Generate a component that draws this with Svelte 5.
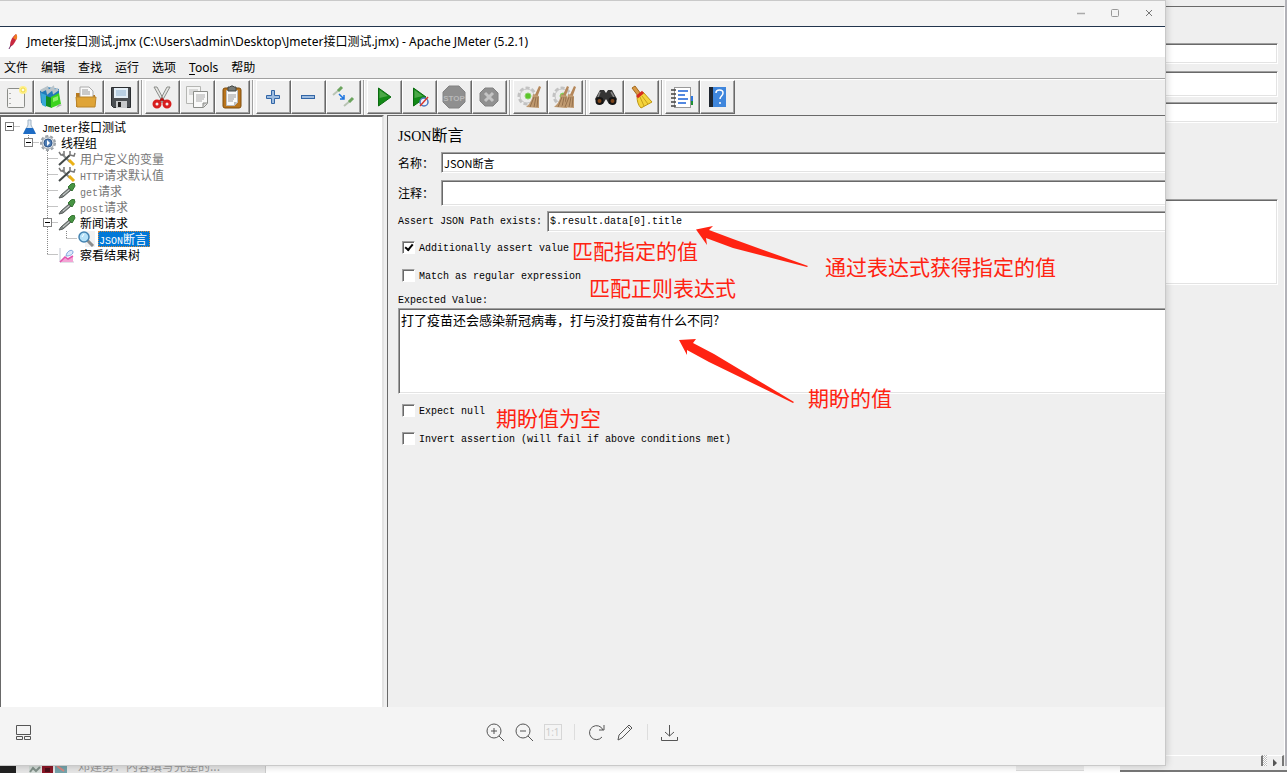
<script>
  const menus = ['文件', '编辑', '查找', '运行', '选项', 'Tools', '帮助'];

  const toolGroups = [
    ['new', 'templates', 'open', 'save'],
    ['cut', 'copy', 'paste'],
    ['expand', 'collapse', 'toggle'],
    ['start', 'start no pauses', 'stop', 'shutdown'],
    ['clear', 'clear all'],
    ['search', 'reset search'],
    ['function helper', 'help']
  ];

  const nodes = [
    { depth: 0, icon: 'flask', latin: 'Jmeter', cjk: '接口测试', open: true, last: true, through: [] },
    { depth: 1, icon: 'gear', latin: '', cjk: '线程组', open: true, last: true, through: [] },
    { depth: 2, icon: 'config', latin: '', cjk: '用户定义的变量', off: true, through: [] },
    { depth: 2, icon: 'config', latin: 'HTTP', cjk: '请求默认值', off: true, through: [] },
    { depth: 2, icon: 'sampler', latin: 'get', cjk: '请求', off: true, through: [] },
    { depth: 2, icon: 'sampler', latin: 'post', cjk: '请求', off: true, through: [] },
    { depth: 2, icon: 'sampler', latin: '', cjk: '新闻请求', open: true, through: [] },
    { depth: 3, icon: 'lens', latin: 'JSON', cjk: '断言', selected: true, last: true, through: [2] },
    { depth: 2, icon: 'chart', latin: '', cjk: '察看结果树', last: true, through: [] }
  ];

  let name = $state('JSON断言');
  let comment = $state('');
  let path = $state('$.result.data[0].title');
  let expected = $state('打了疫苗还会感染新冠病毒，打与没打疫苗有什么不同?');
  let assertValue = $state(true);
  let asRegex = $state(false);
  let expectNull = $state(false);
  let invert = $state(false);
</script>

{#snippet broom(x)}
  <g transform="translate({x} 0)">
    <path d="M21 2l2 1-4 11-3-1z" fill="#b5875a" />
    <path d="M15 10l6 2v12l-13-1c4-3 6-7 7-13z" fill="#c09a70" />
    <path d="M16 13l-4 10M18 13l-2 10M20 13l-1 10" stroke="#94704c" fill="none" />
  </g>
{/snippet}

{#snippet toolIcon(id)}
  <svg width="26" height="26" viewBox="0 0 26 26" aria-hidden="true">
    {#if id === 'new'}
      <rect x="4.500" y="4.500" width="17" height="19" rx="1" fill="#f4f4f3" stroke="#8b8d89" />
      <path d="M7 9v1M7 14v1M7 19v1" stroke="#999" stroke-width="1.500" />
      <circle cx="20" cy="6" r="4" fill="#fff08a" /><circle cx="20" cy="6" r="2" fill="#fffde0" stroke="#f0d840" />
    {:else if id === 'templates'}
      <path d="M2 7l7-4 12 2v10l-12 7-6-3z" fill="#2179b8" />
      <path d="M3 7l6-3 1 4 5-4 1 4 4-3" fill="none" stroke="#b9c4ca" stroke-width="3" />
      <path d="M3 9l5 2v12l-4-2z" fill="#39a9d8" />
      <path d="M8 12l6 2v10l-6-2z" fill="#138f20" /><path d="M13 13l8-4 2 11-10 4z" fill="#3bd31e" />
      <path d="M15 14l5-2v4l-5 2z" fill="#8fef6b" /><path d="M21 20l3 1-6 3z" fill="#a4aaa4" />
    {:else if id === 'open'}
      <path d="M3 9h7l2 2h10v12H3z" fill="#b7791d" />
      <path d="M7 12V3h9l4 4v7H7z" fill="#fafafa" stroke="#aaa" />
      <path d="M9 6h6M9 8h8M9 10h8" stroke="#999" />
      <path d="M3 13h20l-1 10H4z" fill="#dfa437" stroke="#b9842a" />
    {:else if id === 'save'}
      <path d="M3.500 3.500h19v20h-17l-2-2z" fill="#4a4e52" stroke="#2a2d30" />
      <path d="M6 4h14v10H6z" fill="#e4eef6" /><path d="M8 7h10M8 9h10M8 11h10" stroke="#8fb2d1" />
      <path d="M8 17h11v7H8z" fill="#c7c9cb" /><path d="M10 18h3v5h-3z" fill="#222" />
    {:else if id === 'cut'}
      <path d="M5 3l3 0 8 15-2 1zM21 3l-3 0-8 15 2 1z" fill="#e6e6e4" stroke="#8a8c88" />
      <circle cx="8" cy="20" r="3" fill="none" stroke="#d81e1e" stroke-width="3" />
      <circle cx="18" cy="20" r="3" fill="none" stroke="#d81e1e" stroke-width="3" />
      <path d="M11 17l2-2 2 2" fill="none" stroke="#b81010" stroke-width="2" />
    {:else if id === 'copy'}
      <path d="M2.500 2.500h14v17h-14z" fill="#f5f5f4" stroke="#b5b6b3" />
      <path d="M5 6h9M5 8h9M5 10h5" stroke="#bbb" />
      <path d="M9.500 7.500h14v12l-4 4h-10z" fill="#fafafa" stroke="#8b8d89" />
      <path d="M12 11h9M12 13h9M12 15h8M12 17h6" stroke="#aaa" /><path d="M19 23v-4h4" fill="#ccc" stroke="#8b8d89" />
    {:else if id === 'paste'}
      <rect x="4" y="4" width="18" height="20" rx="2" fill="#b9741c" stroke="#7e4c0c" />
      <path d="M7.500 6.500h11v12l-3 3h-8z" fill="#fafafa" stroke="#bbb" />
      <path d="M9 11h8M9 13h8M9 15h6M9 17h5" stroke="#999" />
      <path d="M9 3h2l1-1h2l1 1h2v4H9z" fill="#777b78" stroke="#454844" /><path d="M15 22v-4h3z" fill="#bbb" />
    {:else if id === 'expand'}
      <path d="M11.500 6.500h3v5h5v3h-5v5h-3v-5h-5v-3h5z" fill="#9dbce0" stroke="#3266a6" />
    {:else if id === 'collapse'}
      <rect x="6.500" y="11.500" width="13" height="3" fill="#9dbce0" stroke="#3266a6" />
    {:else if id === 'toggle'}
      <path d="M3 11l6-5M14 22l6-5" stroke="#b9c4b4" stroke-width="2" />
      <path d="M8 7l4-4M19 18l4-4" stroke="#6ba45e" stroke-width="3" />
      <path d="M9 10l5 5M14 11v4h-4" fill="none" stroke="#1d74e0" stroke-width="1.500" />
    {:else if id === 'start' || id === 'start no pauses'}
      <path d="M7.500 4L20 13 7.500 22z" fill="#128a16" stroke="#0b6a10" />
      <path d="M8.500 6L17 12l-8.500 2z" fill="#4ba847" />
      {#if id === 'start no pauses'}
        <circle cx="18" cy="18" r="4" fill="#eef2fb" stroke="#4a78c0" stroke-width="1.500" />
        <path d="M14 22l8-9" stroke="#d8372c" stroke-width="1.500" />
      {/if}
    {:else if id === 'stop'}
      <path d="M8 2h10l6 6v10l-6 6H8l-6-6V8z" fill="#8f8f8f" stroke="#838383" />
      <text x="13" y="17" text-anchor="middle" class="stop">STOP</text>
    {:else if id === 'shutdown'}
      <path d="M9 4h8l5 5v8l-5 5H9l-5-5V9z" fill="#909090" stroke="#828282" />
      <path d="M9 9l8 8M17 9l-8 8" stroke="#c4c4c4" stroke-width="3" />
    {:else if id === 'clear' || id === 'clear all'}
      <circle cx="10" cy="12" r="8" fill="none" stroke="#c2c2c2" stroke-width="3" stroke-dasharray="4 2" />
      <circle cx="10" cy="12" r="7" fill="#ececec" stroke="#c4c4c4" />
      <circle cx="11" cy="12" r="3" fill="#5cc52b" stroke="#8ed46c" />
      {#if id === 'clear all'}{@render broom(-6)}{/if}
      {@render broom(1)}
    {:else if id === 'search'}
      <path d="M7 6l4 0 2 3 2-3 4 0 5 9-3 5h-5l-3-5-3 5H5l-3-5z" fill="#343434" />
      <path d="M7 8l-2 5M18 8l3 5" stroke="#888" stroke-width="1.500" />
      <circle cx="6.500" cy="17" r="3" fill="#7d451c" stroke="#151515" stroke-width="2" />
      <circle cx="19.500" cy="17" r="3" fill="#7d451c" stroke="#151515" stroke-width="2" />
    {:else if id === 'reset search'}
      <path d="M4 4l3-2 6 8-3 2z" fill="#d99a45" stroke="#a46a1c" />
      <path d="M9 12l6-4 9 10-11 6c-3-3-4-7-4-12z" fill="#f5d43b" stroke="#bd9512" />
      <path d="M12 13l4 9M14 12l6 8" stroke="#c7a01c" /><path d="M9 13l6-5" stroke="#d52c20" stroke-width="3" />
    {:else if id === 'function helper'}
      <path d="M21 12h3v5h-3z" fill="#2c76e0" /><path d="M21 17h3v4h-3z" fill="#1d9134" />
      <rect x="5.500" y="3.500" width="16" height="20" fill="#fff" stroke="#999" />
      <path d="M2 6h5M2 10h5M2 14h5M2 18h5M2 22h5" stroke="#444" stroke-width="1.500" />
      <path d="M9 7h10M9 11h7M9 15h10M9 19h8" stroke="#1b62d6" stroke-width="1.500" />
    {:else}
      <path d="M5 3h17v20H5z" fill="#3f86dc" /><path d="M5 3h4v20H5z" fill="#1f2630" />
      <path d="M12 9c0-4 7-4 7 0 0 3-3 3-3 6M16 18v2" fill="none" stroke="#fff" stroke-width="1.500" />
    {/if}
  </svg>
{/snippet}

{#snippet treeIcon(id)}
  <svg class="node-icon" width="18" height="16" viewBox="0 0 18 16" aria-hidden="true">
    {#if id === 'flask'}
      <path d="M8 1h3v5l4 8H4l4-8z" fill="#dfe9f2" stroke="#9fb2c4" /><path d="M6 9h7l3 6H3z" fill="#1e6cc4" />
    {:else if id === 'gear'}
      <circle cx="9" cy="8" r="7" fill="none" stroke="#9ba1a7" stroke-width="2" stroke-dasharray="3 2" />
      <circle cx="9" cy="8" r="6" fill="#d5dbe0" stroke="#a5abb1" />
      <circle cx="9" cy="8" r="4" fill="#4d7db5" stroke="#2e568c" /><path d="M8 5l3 3-3 3z" fill="#fff" />
    {:else if id === 'config'}
      <path d="M4 3l8 8" stroke="#8a8f8f" stroke-width="2" /><path d="M11 9l5 5" stroke="#eab116" stroke-width="3" />
      <path d="M1 14L12 4" stroke="#424848" stroke-width="2" />
      <path d="M1 1l2 3h3V0M12 0v4l4 1 1-3" fill="none" stroke="#777" stroke-width="1.500" />
    {:else if id === 'sampler'}
      <path d="M1 15l2-3 8-7 2 2-8 7z" fill="#848a88" stroke="#555b59" />
      <path d="M5 12l6-5" stroke="#d0d6d4" />
      <path d="M10 4l3-3 3-1 1 3-3 5z" fill="#479443" stroke="#357532" />
    {:else if id === 'lens'}
      <rect x="8" width="10" height="16" fill="#f1f1f1" />
      <path d="M10 9l6 6" stroke="#8d8d8d" stroke-width="3" />
      <circle cx="7" cy="6" r="5" fill="#b5e1f8" stroke="#4383b1" stroke-width="1.500" /><path d="M5 6l2-3" stroke="#fff" />
    {:else}
      <path d="M2 1v14h14" fill="none" stroke="#c3c8d2" />
      <path d="M2 15l5-5 3 2 5-3v6z" fill="#f3a3d4" />
      <path d="M2 15l5-5 3 2 5-3" fill="none" stroke="#e254ae" stroke-width="1.500" />
      <path d="M8 9c1-6 7-7 7-4s-4 4-7 4z" fill="#dbe8fa" stroke="#7fa5dc" />
    {/if}
  </svg>
{/snippet}

<div class="desktop">
  <div class="main">
    <div class="viewer">
      <header class="viewer-bar">
        <button aria-label="Minimize"><svg width="10" height="10"><path d="M1 5.500h8" stroke="#aaa" stroke-width="1.500" /></svg></button>
        <button aria-label="Maximize"><svg width="10" height="10"><rect x="1.500" y="1.500" width="7" height="7" rx="1" fill="none" stroke="#999" /></svg></button>
        <button aria-label="Close"><svg width="10" height="10"><path d="M2 2l6 6M8 2l-6 6" stroke="#777" /></svg></button>
      </header>

      <div class="app">
        <div class="title">
          <svg width="16" height="18" viewBox="0 0 16 18" aria-hidden="true">
            <path d="M11 1c2 3 0 7-3 11l-3 2c0-5 1-9 6-13z" fill="#c8283f" /><path d="M11 1c2 2 1 5 0 6l-3-2z" fill="#ef7d22" />
            <path d="M6 12l-2 4" stroke="#72306d" />
          </svg>
          <span>Jmeter接口测试.jmx (C:\Users\admin\Desktop\Jmeter接口测试.jmx) - Apache JMeter (5.2.1)</span>
        </div>
        <nav class="menu">
          {#each menus as item}
            <button>{#if item === 'Tools'}<u>T</u>ools{:else}{item}{/if}</button>
          {/each}
        </nav>
        <div class="toolbar">
          {#each toolGroups as group}
            <div class="group">
              {#each group as id}
                <button aria-label={id}>{@render toolIcon(id)}</button>
              {/each}
            </div>
          {/each}
        </div>

        <div class="body">
          <ul class="tree">
            {#each nodes as n}
              {@const x = 8.5 + 19 * n.depth}
              <li class:off={n.off}>
                <svg width={19 + 19 * n.depth} height="16" aria-hidden="true">
                  <g stroke="#888" stroke-dasharray="1 1" fill="none">
                    {#each n.through as k}<path d="M{8.5 + 19 * k} 0v16" />{/each}
                    {#if n.depth > 0}<path d="M{x} 0v{n.last ? 8 : 16}" />{/if}
                    <path d="M{x} 7.5H{19 + 19 * n.depth}" />
                  </g>
                  {#if n.open}
                    <rect x={x - 4} y="3.5" width="8" height="8" fill="#fff" stroke="#808080" />
                    <path d="M{x - 2.5} 7.5h5" stroke="#000" />
                  {/if}
                </svg>
                {@render treeIcon(n.icon)}
                <span class="label" class:selected={n.selected}>{#if n.latin}<span class="mono">{n.latin}</span>{/if}{n.cjk}</span>
              </li>
            {/each}
          </ul>

          <form class="panel" onsubmit={(e) => e.preventDefault()}>
            <h1><span>JSON</span>断言</h1>
            <div class="row named">
              <label for="name">名称：</label>
              <input id="name" class="well" bind:value={name} />
            </div>
            <div class="row named tall">
              <label for="comment">注释：</label>
              <input id="comment" class="well" bind:value={comment} />
            </div>
            <div class="row path mono">
              <label for="path">Assert JSON Path exists:</label>
              <input id="path" class="well" bind:value={path} />
            </div>
            <label class="check mono"><input type="checkbox" bind:checked={assertValue} />Additionally assert value</label>
            <label class="check mono"><input type="checkbox" bind:checked={asRegex} />Match as regular expression</label>
            <label class="caption mono" for="expected">Expected Value:</label>
            <textarea id="expected" class="well" bind:value={expected}></textarea>
            <label class="check mono"><input type="checkbox" bind:checked={expectNull} />Expect null</label>
            <label class="check mono"><input type="checkbox" bind:checked={invert} />Invert assertion (will fail if above conditions met)</label>

            <div class="notes">
              <span style="left: 184px; top: 119px">匹配指定的值</span>
              <span style="left: 201px; top: 156px">匹配正则表达式</span>
              <span style="left: 437px; top: 135px">通过表达式获得指定的值</span>
              <span style="left: 420px; top: 266px">期盼的值</span>
              <span style="left: 108px; top: 286px">期盼值为空</span>
              <svg width="440" height="300" viewBox="0 0 440 300" aria-hidden="true">
                <path d="M308 113.500L325 110l-4 4 24 9 75 27-1 1-74-19-27-10 1 7z" fill="#ff2312" />
                <path d="M291 224l17-1-3 4 21 11 80 48-1 1-84-41-22-12v5z" fill="#ff2312" />
              </svg>
            </div>
          </form>
        </div>
      </div>

      <footer>
        <button class="thumbs" aria-label="Thumbnails"><svg width="17" height="17"><path d="M1.500 1.500h14v9h-14zM1.500 12.500h6v3h-6zM9.500 12.500h6v3h-6z" fill="none" stroke="#555" /></svg></button>
        <div class="actions">
          <button aria-label="Zoom in"><svg width="19" height="19"><circle cx="8" cy="8" r="7" /><path d="M13 13l5 5M5 8h6M8 5v6" /></svg></button>
          <button aria-label="Zoom out"><svg width="19" height="19"><circle cx="8" cy="8" r="7" /><path d="M13 13l5 5M5 8h6" /></svg></button>
          <button class="ratio" disabled>1:1</button>
          <i></i>
          <button aria-label="Rotate"><svg width="19" height="19"><path d="M15 14a7 7 0 1 1 1-7M17 2v5h-5" /></svg></button>
          <button aria-label="Edit"><svg width="19" height="19"><path d="M2 17l1-5L13 2l3 3L6 15zM12 4l2 2" /></svg></button>
          <i></i>
          <button aria-label="Download"><svg width="19" height="19"><path d="M9.500 2v11M5 9l4.500 4L14 9M1.500 14v3.500h16V14" /></svg></button>
        </div>
      </footer>
    </div>

    <aside class="behind">
      <div class="sheet">
        <div class="well one"></div>
        <div class="well two"></div>
        <div class="well three"></div>
        <div class="well four"></div>
      </div>
      <div class="scroll"><span class="thumb"></span><span class="dither"></span><button aria-label="Scroll right"><svg width="6" height="9"><path d="M1 0l4 4-4 4z" fill="#555" /></svg></button></div>
    </aside>
  </div>

  <div class="strip">
    <div class="chat">
      <b></b>
      <svg width="38" height="7" aria-hidden="true">
        <path d="M0 0h12v7H0z" fill="#d4dcd8" /><path d="M1 6l3-4 3 3 4-4" stroke="#82918a" fill="none" stroke-width="2" />
        <path d="M13 0h11v7H13z" fill="#8c1727" /><path d="M16 2h5v4h-5z" fill="#4e0f19" />
        <path d="M26 0h12v7H26z" fill="#76a4ab" /><path d="M28 0l7 5" stroke="#d98780" stroke-width="2" />
      </svg>
      <span>邓建勇：内容填写完整的...</span>
    </div>
    <div class="field"></div>
    <div class="track"></div>
  </div>
</div>

<style>
  :global(body) { background: #fff; }
  .desktop {
    display: flex; flex-direction: column; height: 100vh; overflow: hidden;
    font: 12px/16px "Noto Sans", "Noto Sans CJK SC", sans-serif; color: #000;
  }
  button { font: inherit; color: inherit; background: none; border: 0; padding: 0; }
  input, textarea { font: inherit; color: inherit; border-radius: 0; outline: 0; margin: 0; }
  .main { flex: 1; display: flex; min-height: 0; }
  .viewer {
    flex: 1; min-width: 0; display: flex; flex-direction: column; z-index: 1;
    background: #f4f4f4; border: solid #c9c9c9; border-width: 1px 1px 1px 0;
    box-shadow: 0 0 8px rgba(0, 0, 0, 0.2);
  }
  .viewer-bar { height: 25px; box-sizing: border-box; display: flex; justify-content: flex-end; align-items: center; gap: 24px; padding: 0 11px 2px 0; }
  .viewer-bar button { width: 10px; height: 10px; display: flex; }

  .app { flex: 1; min-height: 0; display: flex; flex-direction: column; border-top: 1px solid #22354d; background: #efefef; }
  .title { height: 30px; flex: none; display: flex; align-items: center; gap: 6px; padding-left: 5px; background: #fff; white-space: nowrap; }
  .menu { height: 21px; flex: none; display: flex; align-items: center; gap: 13px; padding-left: 4px; border-bottom: 1px solid #a0a0a0; }
  u { text-underline-offset: 2px; }

  .toolbar { flex: none; display: flex; height: 36px; border-top: 1px solid #fff; box-sizing: border-box; overflow: hidden; }
  .group { display: flex; margin-left: -1px; }
  .group + .group { margin-left: 2px; border-left: 1px solid #a0a0a0; padding-left: 3px; box-shadow: inset 1px 0 #fff; }
  .group button {
    width: 35px; height: 34px; box-sizing: border-box; display: grid; place-items: center;
    border: solid; border-width: 1px; border-color: #fff #696969 #696969 #fff; padding-right: 2px;
    box-shadow: inset -1px -1px #a0a0a0;
  }
  .stop { font: bold 8px "Liberation Sans", sans-serif; fill: #b9b9b9; }

  .body { flex: 1; min-height: 0; display: flex; gap: 3px; }
  .tree {
    width: 381px; flex: none; margin: 0; padding: 2px 0 0; list-style: none; background: #fff;
    border: solid #696969; border-width: 2px 0 0 1px; border-right: 2px solid #e3e3e3;
    font-family: "Noto Sans CJK SC", sans-serif;
  }
  .tree li { display: flex; height: 16px; }
  .tree svg { flex: none; }
  .off { color: #777; }
  .label { margin-left: 3px; padding: 0 1px; line-height: 16px; white-space: nowrap; }
  .selected { padding-right: 3px; background: #0078d7; color: #fff; outline: 1px dotted #d98a3a; outline-offset: -1px; }
  .mono { font-family: "Liberation Mono", monospace; font-size: 10px; }

  .panel {
    flex: 1; min-width: 0; position: relative; display: flex; flex-direction: column;
    padding: 8px 0 0 10px; border: solid #696969; border-width: 1px 0 0 1px;
    font-family: "Noto Sans CJK SC", sans-serif; overflow: hidden;
  }
  h1 { margin: 0 0 5px; font-size: 16px; font-weight: 400; line-height: 20px; }
  h1 span { font-family: "Liberation Serif", serif; font-size: 14px; }
  .well {
    box-sizing: border-box; background: #fff; border: 1px solid; border-color: #a0a0a0 #fff #fff #a0a0a0;
    box-shadow: inset 1px 1px #696969, inset -1px -1px #e3e3e3;
  }
  .panel .well { border-right: 0; box-shadow: inset 1px 1px #696969, inset 0 -1px #e3e3e3; }
  .row { display: flex; align-items: center; height: 21px; }
  .row .well { flex: 1; min-width: 0; height: 100%; padding: 0 2px; }
  .named label { width: 43px; }
  .named .well { font-size: 11px; }
  .tall { height: 26px; margin-top: 7px; }
  .path { margin-top: 5px; gap: 5px; }
  .check { display: flex; align-items: flex-start; gap: 4px; height: 16px; margin: 9px 0 0 4px; }
  .check + .check { margin-top: 12px; }
  .check input {
    appearance: none; width: 13px; height: 13px; background: #fff; border: 1px solid;
    border-color: #a0a0a0 #fff #fff #a0a0a0; box-shadow: inset 1px 1px #696969; display: grid; place-items: center;
  }
  .check input:checked::after {
    content: ""; width: 6px; height: 3px; border: solid #000; border-width: 0 0 2px 2px;
    transform: rotate(-50deg); margin-bottom: 2px;
  }
  .caption { margin-top: 9px; line-height: 14px; }
  textarea { height: 86px; resize: none; padding: 2px; font-size: 13px; line-height: 18px; overflow: hidden; }
  textarea + .check { margin-top: 10px; }

  /* Hand-made remarks floating over the form */
  .notes { position: absolute; inset: 0; pointer-events: none; color: #ff2312; font-size: 21px; line-height: 30px; white-space: nowrap; }
  .notes span { position: absolute; }

  footer { height: 58px; flex: none; display: grid; grid-template-columns: 1fr auto 1fr; align-items: center; padding: 0 16px 0 15px; box-sizing: border-box; }
  footer button { display: flex; }
  .thumbs { margin-top: -8px; justify-self: start; }
  .actions { display: flex; align-items: center; gap: 10px; margin-top: -8px; }
  .actions svg { fill: none; stroke: #555; }
  .actions i { width: 1px; height: 16px; background: #ddd; margin: 0 2px; }
  .actions .ratio { width: 18px; height: 16px; box-sizing: border-box; border: 1px solid #d6d6d6; color: #ccc; font-size: 10px; line-height: 14px; justify-content: center; }

  .behind { width: 121px; flex: none; display: flex; flex-direction: column; background: #efefef; border-right: 2px solid #b2b2b8; box-sizing: border-box; }
  .sheet { flex: 1; margin-top: 6px; border-top: 1px solid #696969; border-right: 1px solid #fff; padding: 36px 6px 0 0; }
  .behind .well { border-left: 0; box-shadow: inset 0 1px #696969, inset -1px -1px #e3e3e3; }
  .one, .three { height: 21px; }
  .two { height: 26px; margin: 7px 0 5px; }
  .four { height: 86px; margin-top: 76px; }
  .scroll { height: 15px; margin-bottom: -4px; display: flex; border-right: 1px solid #efefef; }
  .thumb { flex: 1; background: #efefef; border-top: 1px solid #fff; border-right: 2px solid #777; }
  .dither { width: 4px; background: repeating-conic-gradient(#bbb 0 25%, #fff 0 50%) 0 0 / 2px 2px; }
  .scroll button { width: 17px; box-sizing: border-box; display: grid; place-items: center; background: #efefef; border-top: 1px solid #fff; border-right: 2px solid #777; }

  .strip { height: 7px; flex: none; display: flex; }
  .chat { width: 265px; height: 7px; display: flex; align-items: flex-end; overflow: hidden; background: #e6e6e6; border-right: 1px solid #ccc; color: #999; }
  .chat b { width: 16px; height: 7px; background: #222; margin-right: 13px; }
  .chat span { margin-left: 11px; line-height: 14px; white-space: nowrap; font-family: "Noto Sans CJK SC", sans-serif; }
  .field { flex: 1; margin-left: 750px; height: 4px; background: #efefef; border-bottom: 1px solid #ddd; margin-right: 36px; }
  .track { width: 167px; background: #efefef; height: 4px; border-bottom: 2px solid #777; }
</style>
